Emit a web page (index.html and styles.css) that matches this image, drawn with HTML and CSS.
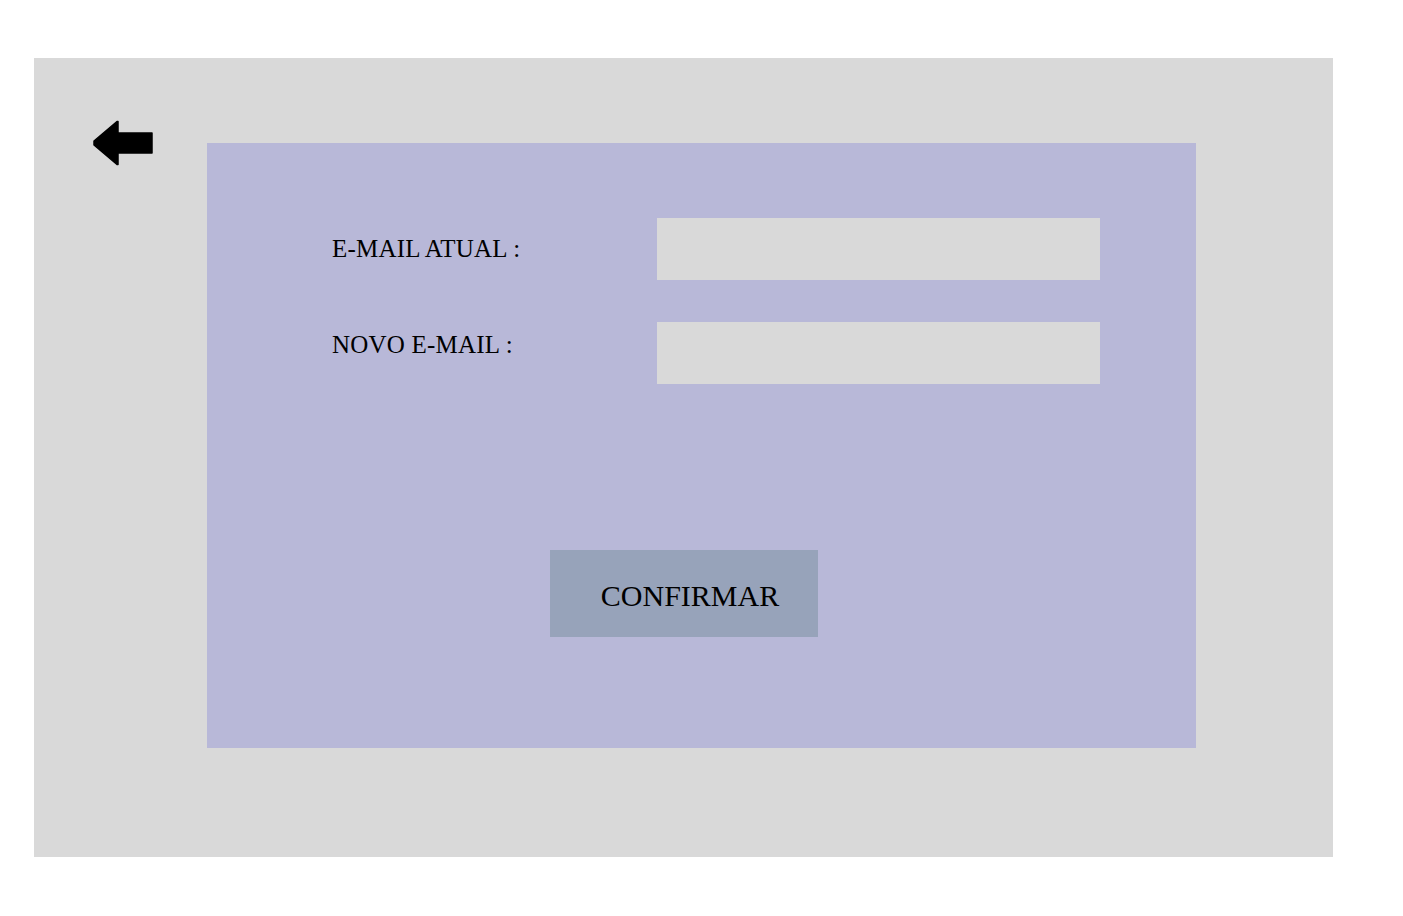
FILE: index.html
```html
<!DOCTYPE html>
<html lang="pt">
<head>
<meta charset="utf-8">
<title>Alterar e-mail</title>
<link rel="stylesheet" href="styles.css">
</head>
<body>
<div class="panel">
  <a class="back" href="#" aria-label="Voltar">
    <svg width="60" height="46" viewBox="0 0 60 46">
      <polygon points="1,21 24,1.5 25,1.5 25,13 59,13 59,33 25,33 25,44.5 24,44.5 1,25" fill="#000" stroke="#000" stroke-width="1.5" stroke-linejoin="round"/>
    </svg>
  </a>
  <form class="card">
    <div class="row">
      <label class="label">E-MAIL ATUAL :</label>
      <input class="field" type="text">
    </div>
    <div class="row row-second">
      <label class="label label-up">NOVO E-MAIL :</label>
      <input class="field" type="text">
    </div>
    <div class="actions">
      <button class="confirm" type="button">CONFIRMAR</button>
    </div>
  </form>
</div>
</body>
</html>
```
FILE: styles.css
```css
html, body {
  margin: 0;
  padding: 0;
  background: #ffffff;
}
body {
  padding: 58px 0 0 34px;
  font-family: "Liberation Serif", "DejaVu Serif", serif;
  color: #000;
}
.panel {
  width: 1299px;
  height: 799px;
  box-sizing: border-box;
  background: #d9d9d9;
  display: flex;
  align-items: flex-start;
  padding: 62px 0 0 59px;
}
.back {
  display: block;
  width: 60px;
  height: 46px;
  flex: none;
}
.back svg {
  display: block;
}
.card {
  margin: 23px 0 0 54px;
  width: 989px;
  height: 605px;
  box-sizing: border-box;
  background: #b8b8d8;
  padding: 75px 0 0 125px;
  display: flex;
  flex-direction: column;
}
.row {
  display: flex;
  align-items: center;
  height: 62px;
}
.row-second {
  margin-top: 42px;
}
.label {
  width: 325px;
  font-size: 25px;
  letter-spacing: 0.2px;
  flex: none;
}
.label-up {
  position: relative;
  top: -8px;
}
.field {
  width: 443px;
  height: 62px;
  box-sizing: border-box;
  border: none;
  background: #d9d9d9;
  margin: 0;
  padding: 0 12px;
  outline: none;
}
.actions {
  margin: 166px 0 0 218px;
}
.confirm {
  width: 268px;
  height: 87px;
  border: none;
  background: #97a3ba;
  font-family: "Liberation Serif", "DejaVu Serif", serif;
  font-size: 30px;
  color: #000;
  padding: 4px 0 0 12px;
  margin: 0;
  cursor: pointer;
}
```
